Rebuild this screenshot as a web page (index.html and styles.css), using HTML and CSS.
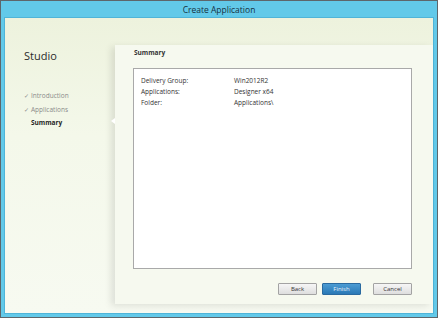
FILE: index.html
```html
<!DOCTYPE html>
<html lang="en">
<head>
    <meta charset="UTF-8">
    <title>Create Application</title>
    <link rel="stylesheet" href="styles.css">
</head>
<body>
    <div class="window">
        <div class="title-bar">Create Application</div>
        <div class="client">
            <div class="sidebar">
                <h1 class="brand">Studio</h1>
                <ul class="steps">
                    <li class="done">Introduction</li>
                    <li class="done">Applications</li>
                    <li class="current">Summary</li>
                </ul>
            </div>
            <div class="panel">
                <span class="pointer"></span>
                <h2 class="panel-title">Summary</h2>
                <div class="summary-box">
                    <div class="row"><span class="key">Delivery Group:</span><span>Win2012R2</span></div>
                    <div class="row"><span class="key">Applications:</span><span>Designer x64</span></div>
                    <div class="row"><span class="key">Folder:</span><span>Applications\</span></div>
                </div>
                <div class="buttons">
                    <button class="btn">Back</button>
                    <button class="btn primary">Finish</button>
                    <button class="btn cancel">Cancel</button>
                </div>
            </div>
        </div>
    </div>
</body>
</html>
```

FILE: styles.css
```css
body {
    margin: 0;
    font-family: "Open Sans", "Noto Sans", sans-serif;
    background-color: #4a4a4a;
}

.window {
    width: 436px;
    height: 316px;
    border: 1px solid #5d666b;
    background-color: #62c9e9;
    display: flex;
    flex-direction: column;
}

.title-bar {
    height: 16px;
    line-height: 17px;
    text-align: center;
    font-size: 8.5px;
    color: #16313f;
}

.client {
    flex: 1;
    margin: 0 3px 3px 3px;
    border: 1px solid #4fb4d8;
    background: linear-gradient(to bottom, #edf2dd, #f4f8ea 40%, #f7faf1);
    display: flex;
}

.sidebar {
    width: 110px;
    flex-shrink: 0;
    box-sizing: border-box;
    padding: 30px 0 0 19px;
}

.brand {
    margin: 0;
    font-size: 11px;
    font-weight: 400;
    color: #2b2b2b;
}

.steps {
    list-style: none;
    margin: 26px 0 0 0;
    padding: 0;
    font-size: 6.5px;
    color: #8a8a8a;
}

.steps li {
    height: 13.5px;
    line-height: 13.5px;
    padding-left: 7px;
    position: relative;
}

.steps li.done::before {
    content: "\2713";
    position: absolute;
    left: 0;
    color: #8c8c8c;
    font-family: "DejaVu Sans", sans-serif;
    font-size: 6px;
    font-weight: 700;
}

.steps li.current {
    color: #1f1f1f;
    font-weight: 700;
}

.panel {
    flex: 1;
    margin: 27px 0 9px 0;
    background-color: #f6f9ef;
    box-shadow: -4px 2px 7px rgba(0, 0, 0, 0.1);
    position: relative;
    display: flex;
    flex-direction: column;
    padding: 0 21px 0 18px;
}

.pointer {
    position: absolute;
    left: -4px;
    top: 73px;
    width: 0;
    height: 0;
    border-top: 3px solid transparent;
    border-bottom: 3px solid transparent;
    border-right: 4px solid #ffffff;
}

.panel-title {
    margin: 0 0 7px 1px;
    font-size: 6.5px;
    font-weight: 700;
    color: #333;
    height: 16px;
    line-height: 16px;
}

.summary-box {
    height: 201px;
    box-sizing: border-box;
    border: 1px solid #a9a9a9;
    background-color: #ffffff;
    padding: 6px 0 0 7px;
    font-size: 6.5px;
    color: #333;
}

.row {
    display: flex;
    height: 11px;
    line-height: 11px;
}

.key {
    width: 93px;
}

.buttons {
    display: flex;
    justify-content: flex-end;
    margin-top: 14px;
    gap: 5px;
}

.btn {
    width: 39px;
    height: 12px;
    padding: 0;
    font-family: inherit;
    font-size: 6px;
    color: #333;
    border: 1px solid #a3a3a3;
    border-radius: 1px;
    background: linear-gradient(to bottom, #f6f6f6, #dedede);
}

.btn.primary {
    background: linear-gradient(to bottom, #4b9bd3, #2a78b6);
    border-color: #2a6aa0;
    color: #e8f2fa;
}

.btn.cancel {
    margin-left: 7px;
}
```
